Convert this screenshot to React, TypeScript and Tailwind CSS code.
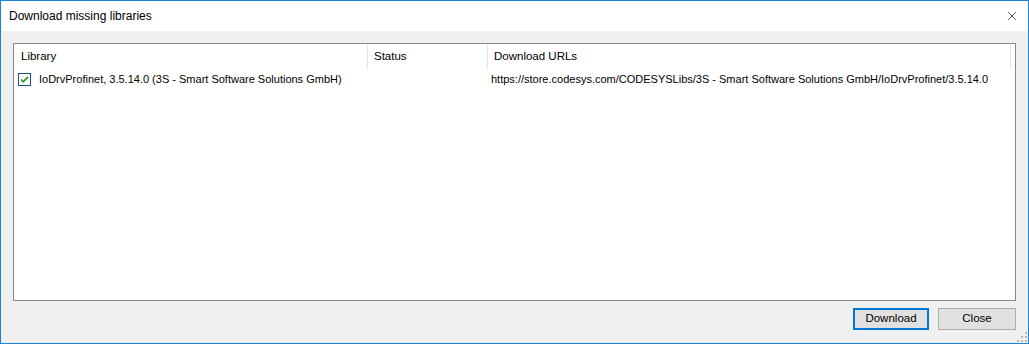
import { X } from "lucide-react";

const font = { fontFamily: '"Liberation Sans", Arial, sans-serif' };

function CheckBox() {
  return (
    <svg width="13" height="13" viewBox="0 0 13 13" className="shrink-0">
      <rect x="0.5" y="0.5" width="12" height="12" fill="#fff" stroke="#1f4e79" />
      <path d="M3 6.5 L5.2 8.8 L10 3.8" fill="none" stroke="#22a022" strokeWidth="1.8" />
    </svg>
  );
}

function Grip() {
  const dots = [
    [8, 0],
    [4, 4],
    [8, 4],
    [0, 8],
    [4, 8],
    [8, 8],
  ];
  return (
    <svg width="10" height="10" viewBox="0 0 10 10" className="absolute right-[1px] bottom-[1px]">
      {dots.map(([x, y]) => (
        <rect key={`${x}-${y}`} x={x} y={y} width="2" height="2" fill="#b8b8b8" />
      ))}
    </svg>
  );
}

export default function App() {
  return (
    <div
      className="relative w-[1029px] h-[344px] border border-[#1883d7] bg-[#f0f0f0] flex flex-col text-[12px] text-black"
      style={font}
    >
      <div className="h-[30px] bg-white flex items-center justify-between pl-[8px] pr-[9px] shrink-0">
        <span className="text-[12px]">Download missing libraries</span>
        <X size={14} strokeWidth={1.2} className="text-black" />
      </div>
      <div className="flex-1 flex flex-col px-[12px] pt-[12px]">
        <div className="h-[258px] border border-[#828790] bg-white flex flex-col overflow-hidden">
          <div className="h-[25px] flex items-stretch pt-[1px] text-[11.5px]">
            <div className="w-[354px] shrink-0 border-r border-[#e5e5e5] pl-[7px] flex items-center">Library</div>
            <div className="w-[120px] shrink-0 border-r border-[#e5e5e5] pl-[6px] flex items-center">Status</div>
            <div className="w-[523px] shrink-0 border-r border-[#e5e5e5] pl-[6px] flex items-center">Download URLs</div>
          </div>
          <div className="h-[18px] flex items-center mt-[1px] text-[11px]">
            <div className="w-[354px] shrink-0 flex items-center pl-[4px] gap-[8px] overflow-hidden">
              <CheckBox />
              <span className="whitespace-nowrap">IoDrvProfinet, 3.5.14.0 (3S - Smart Software Solutions GmbH)</span>
            </div>
            <div className="w-[120px] shrink-0" />
            <div className="w-[523px] shrink-0 pl-[3px] whitespace-nowrap overflow-hidden">
              https://store.codesys.com/CODESYSLibs/3S - Smart Software Solutions GmbH/IoDrvProfinet/3.5.14.0
            </div>
          </div>
        </div>
        <div className="flex justify-end gap-[9px] mt-[7px] text-[11.5px]">
          <button className="w-[76px] h-[22px] border-2 border-[#0078d7] bg-[#e1e1e1] flex items-center justify-center">
            Download
          </button>
          <button className="w-[78px] h-[22px] border border-[#adadad] bg-[#e1e1e1] flex items-center justify-center">
            Close
          </button>
        </div>
      </div>
      <Grip />
    </div>
  );
}
